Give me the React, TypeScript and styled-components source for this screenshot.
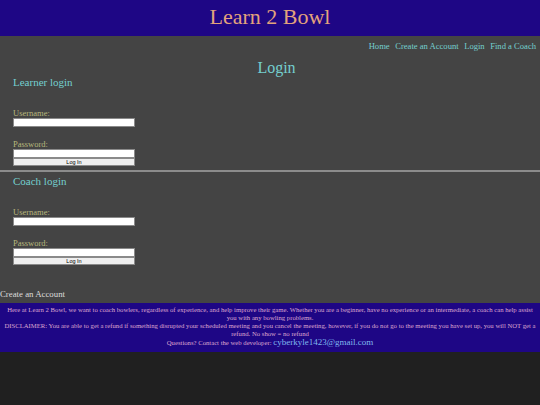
import React from 'react';
import styled, { createGlobalStyle } from 'styled-components';

const GlobalStyle = createGlobalStyle`
  html, body {
    margin: 0;
    padding: 0;
    background-color: #202020;
  }
  body {
    font-family: "Liberation Serif", "Times New Roman", serif;
  }
  * {
    box-sizing: border-box;
  }
`;

function LoginForm({ title }: { title: string }) {
  return (
    <Section>
      <SectionTitle>{title}</SectionTitle>
      <Label $top={20}>Username:</Label>
      <TextInput type="text" />
      <Label $top={12}>Password:</Label>
      <TextInput type="password" />
      <SubmitButton type="button">Log In</SubmitButton>
    </Section>
  );
}

export default function App() {
  return (
    <>
      <GlobalStyle />
      <Header>
        <SiteTitle>Learn 2 Bowl</SiteTitle>
      </Header>
      <Main>
        <Nav>
          <NavLink href="#">Home</NavLink>
          <NavLink href="#">Create an Account</NavLink>
          <NavLink href="#">Login</NavLink>
          <NavLink href="#">Find a Coach</NavLink>
        </Nav>
        <PageTitle>Login</PageTitle>
        <LoginForm title="Learner login" />
        <Divider />
        <LoginForm title="Coach login" />
        <CreateLink href="#">Create an Account</CreateLink>
      </Main>
      <Footer>
        <FooterText>
          Here at Learn 2 Bowl, we want to coach bowlers, regardless of experience, and help improve their game.
          Whether you are a beginner, have no experience or an intermediate, a coach can help assist you with any
          bowling problems.
        </FooterText>
        <FooterText>
          DISCLAIMER: You are able to get a refund if something disrupted your scheduled meeting and you cancel the
          meeting, however, if you do not go to the meeting you have set up, you will NOT get a refund. No show = no
          refund
        </FooterText>
        <Contact>
          Questions? Contact the web developer: <Email href="#">cyberkyle1423@gmail.com</Email>
        </Contact>
      </Footer>
    </>
  );
}

const Header = styled.header`
  height: 36px;
  padding-bottom: 3px;
  background-color: #1e0685;
  display: flex;
  align-items: center;
  justify-content: center;
`;

const SiteTitle = styled.h1`
  margin: 0;
  font-size: 22px;
  font-weight: normal;
  line-height: 26px;
  color: #e3a37c;
`;

const Main = styled.main`
  background-color: #444444;
  padding-bottom: 4px;
`;

const Nav = styled.nav`
  display: flex;
  justify-content: flex-end;
  gap: 5.5px;
  padding: 5px 4px 0 0;
`;

const NavLink = styled.a`
  font-size: 8.6px;
  line-height: 10px;
  color: #74cfcf;
  text-decoration: none;
`;

const PageTitle = styled.h2`
  margin: 9px 0 0;
  padding-left: 13px;
  text-align: center;
  font-size: 16px;
  line-height: 16px;
  font-weight: normal;
  color: #74cfcf;
`;

const Section = styled.section`
  display: flex;
  flex-direction: column;
  align-items: flex-start;
  padding-left: 13px;
`;

const SectionTitle = styled.h3`
  margin: 0;
  font-size: 11px;
  line-height: 12px;
  font-weight: normal;
  color: #74cfcf;
`;

const Label = styled.label<{ $top: number }>`
  margin-top: ${(p) => p.$top}px;
  font-size: 8.5px;
  line-height: 10px;
  color: #b7b77c;
`;

const TextInput = styled.input`
  width: 122px;
  height: 9px;
  margin: 0;
  padding: 0;
  border: 1px solid #8a8a8a;
  background-color: #ffffff;
`;

const SubmitButton = styled.button`
  width: 122px;
  height: 8px;
  margin: 0;
  padding: 0;
  border: 1px solid #8a8a8a;
  background-color: #efefef;
  font-family: "Liberation Sans", Arial, sans-serif;
  font-size: 5.5px;
  line-height: 6px;
  color: #000000;
`;

const Divider = styled.hr`
  margin: 4px 0 3px;
  height: 2px;
  border: none;
  background-color: #8c8c8c;
`;

const CreateLink = styled.a`
  display: block;
  margin-top: 24px;
  font-size: 8.8px;
  line-height: 10px;
  color: #dcdcdc;
  text-decoration: none;
`;

const Footer = styled.footer`
  background-color: #1e0685;
  padding: 3px 3px 4px;
  text-align: center;
`;

const FooterText = styled.p`
  margin: 0;
  font-size: 6.7px;
  line-height: 8px;
  color: #dda6cf;
`;

const Contact = styled.p`
  margin: 0;
  height: 10px;
  font-size: 6.7px;
  line-height: 10px;
  color: #dda6cf;
`;

const Email = styled.a`
  font-size: 9px;
  line-height: 0;
  color: #7fb6ee;
  text-decoration: none;
`;
